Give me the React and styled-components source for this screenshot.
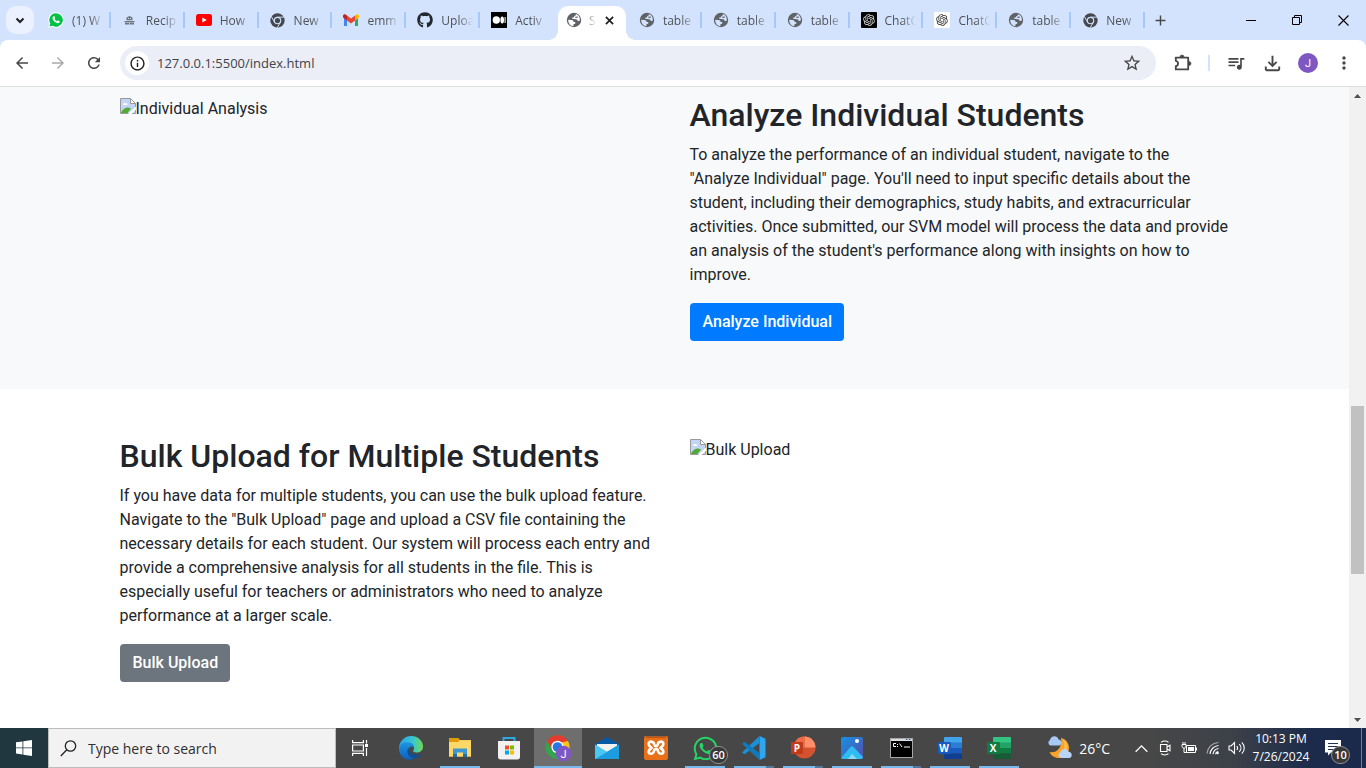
import React from "react";
import styled, { createGlobalStyle, css } from "styled-components";
import { FaGithub, FaWhatsapp } from "react-icons/fa";
import { RiOpenaiFill } from "react-icons/ri";
import {
  MdArrowBack,
  MdArrowForward,
  MdRefresh,
  MdInfoOutline,
  MdStarBorder,
  MdOutlineQueueMusic,
  MdOutlineFileDownload,
  MdMoreVert,
  MdAdd,
} from "react-icons/md";

const uiFont = `"Open Sans", "Noto Sans", sans-serif`;

const GlobalStyle = createGlobalStyle`
  *, *::before, *::after { box-sizing: border-box; }
  body { margin: 0; background: #fff; font-family: Roboto, sans-serif; }
  button { border: 0; margin: 0; padding: 0; background: none; font: inherit; color: inherit; }
  svg { display: block; flex: none; }
`;

const Screen = styled.div`
  display: flex;
  flex-direction: column;
  height: 100vh;
  overflow: hidden;
`;

/* ---------- Browser chrome ---------- */

const TabStrip = styled.header`
  display: flex;
  flex: none;
  height: 40px;
  padding-left: 6px;
  background: #d3e3fd;
  font-family: ${uiFont};
  font-size: 12px;
  color: #505256;
`;

const TabSearch = styled.button`
  display: grid;
  place-items: center;
  flex: none;
  width: 28px;
  height: 28px;
  margin: 6px 2px 0 0;
  border-radius: 10px;
  background: #ebf1fe;
  color: #1f1f1f;
`;

const Tabs = styled.div`
  display: grid;
  grid-auto-columns: minmax(0, 1fr);
  grid-auto-flow: column;
  flex: 0 1 1108px;
  min-width: 0;
`;

const Tab = styled.div`
  position: relative;
  display: flex;
  align-items: center;
  min-width: 0;
  padding: 0 6px 0 12px;
  gap: 8px;

  &::after {
    content: "";
    position: absolute;
    right: -1px;
    top: 12px;
    width: 2px;
    height: 16px;
    background: ${(p) => (p.$plain ? "transparent" : "#a8c7fa")};
  }
`;

const ActiveTab = styled.div`
  position: relative;
  display: flex;
  align-items: center;
  min-width: 0;
  height: 34px;
  margin: 6px 1px 0 5px;
  padding: 0 10px 6px 8px;
  gap: 7px;
  border-radius: 10px 10px 0 0;
  background: #fff;

  &::before,
  &::after {
    content: "";
    position: absolute;
    bottom: 0;
    width: 10px;
    height: 10px;
  }
  &::before {
    left: -10px;
    background: radial-gradient(circle at 0 0, transparent 10px, #fff 10px);
  }
  &::after {
    right: -10px;
    background: radial-gradient(circle at 100% 0, transparent 10px, #fff 10px);
  }
`;

const TabTitle = styled.span`
  flex: 1;
  min-width: 0;
  overflow: hidden;
  white-space: nowrap;
  mask-image: linear-gradient(to right, #000 calc(100% - 14px), transparent 100%);
`;

const Favicon = styled.span`
  display: grid;
  place-items: center;
  flex: none;
  width: 16px;
  height: 16px;
  border-radius: ${(p) => (p.$bg ? "1px" : "0")};
  background: ${(p) => p.$bg || "transparent"};
  color: ${(p) => p.$color || "#5f6368"};
`;

const IconButton = styled.button`
  display: grid;
  place-items: center;
  flex: none;
  width: ${(p) => p.$w || 36}px;
  height: ${(p) => p.$h || 34}px;
  color: ${(p) => p.$color || "#474747"};
`;

const WindowControls = styled.div`
  display: flex;
  margin-left: auto;
`;

const ToolbarBack = styled.div`
  flex: none;
  background: #d3e3fd;
`;

const Toolbar = styled.div`
  display: flex;
  align-items: center;
  height: 47px;
  padding: 0 4px;
  border-bottom: 1px solid #dde2e1;
  border-radius: 8px 8px 0 0;
  background: #fff;
`;

const AddressBar = styled.div`
  display: flex;
  align-items: center;
  flex: 1;
  min-width: 0;
  height: 34px;
  margin: 0 9px 0 8px;
  padding: 0 6px 0 5px;
  border-radius: 17px;
  background: #ebeef7;
`;

const SiteInfo = styled.button`
  display: grid;
  place-items: center;
  width: 24px;
  height: 24px;
  border-radius: 50%;
  background: #fff;
  color: #1f1f1f;
`;

const AddressInput = styled.input`
  flex: 1;
  min-width: 0;
  padding: 0 8px;
  border: 0;
  outline: 0;
  background: none;
  font-family: ${uiFont};
  font-size: 13px;
  color: #404348;
`;

const ToolbarDivider = styled.span`
  width: 2px;
  height: 16px;
  margin: 0 8px 0 7px;
  background: #d3e3fd;
`;

const Avatar = styled.span`
  display: grid;
  place-items: center;
  width: 20px;
  height: 20px;
  border-radius: 50%;
  background: #7e57c2;
  color: #fff;
  font-family: Roboto, sans-serif;
  font-size: 11px;
`;

/* ---------- Web page ---------- */

const Viewport = styled.div`
  display: flex;
  flex: 1;
  min-height: 0;
`;

const Page = styled.main`
  flex: 1;
  min-width: 0;
  overflow: hidden;
  color: #212529;
  font-size: 16px;
  line-height: 24px;
`;

const Section = styled.section`
  padding: ${(p) => (p.$first ? 9 : 48)}px 0 48px;
  background: ${(p) => (p.$first ? "#f8f9fa" : "#fff")};
`;

const Container = styled.div`
  display: grid;
  grid-template-columns: 1fr 1fr;
  gap: 30px;
  max-width: 1140px;
  margin: 0 auto;
  padding: 0 15px;
`;

const Heading = styled.h2`
  margin: 0 0 8px;
  font-size: 32px;
  font-weight: 500;
  line-height: 39px;
`;

const Copy = styled.p`
  margin: 0 0 16px;
`;

const ActionLink = styled.a`
  display: inline-block;
  padding: 6px 11px 6px 12px;
  border: 1px solid transparent;
  border-radius: 4px;
  background: ${(p) => (p.$secondary ? "#6c757d" : "#007bff")};
  color: #fff;
  font-weight: 500;
  text-decoration: none;
  vertical-align: top;
`;

const MissingImage = styled.div`
  display: flex;
  align-items: flex-start;
  padding-top: 1px;

  svg {
    margin-top: 1px;
  }
`;

const Scrollbar = styled.div`
  display: flex;
  flex-direction: column;
  flex: none;
  width: 17px;
  background: #f1f1f1;
`;

const ScrollArrow = styled.button`
  display: grid;
  place-items: center;
  height: 17px;
  color: #505050;
`;

const ScrollTrack = styled.div`
  display: flex;
  flex-direction: column;
  flex: 1;
  padding: 0 2px;
`;

const ScrollSpace = styled.div`
  flex: ${(p) => p.$share} 0 0;
  background: ${(p) => (p.$thumb ? "#c1c1c1" : "transparent")};
`;

/* ---------- Taskbar ---------- */

const Taskbar = styled.footer`
  display: flex;
  flex: none;
  height: 40px;
  background: linear-gradient(to right, #474747 84%, #3d4148 90%, #1c2b4b 96%, #1b2a4a);
  color: #fff;
  font-family: ${uiFont};
`;

const StartButton = styled.button`
  display: grid;
  place-items: center;
  flex: none;
  width: 48px;
  background: #203740;
`;

const SearchBox = styled.label`
  display: flex;
  align-items: center;
  flex: 0 1 288px;
  min-width: 120px;
  padding-left: 11px;
  gap: 11px;
  border: 1px solid #bdbdbd;
  background: #f2f2f2;
  color: #222;

  input {
    flex: 1;
    min-width: 0;
    padding: 0;
    border: 0;
    outline: 0;
    background: none;
    font: inherit;
    font-size: 14px;
  }
  input::placeholder {
    color: #2f2f2f;
    opacity: 1;
  }
`;

const Apps = styled.div`
  display: flex;
  gap: 1px;
  margin-left: 3px;
`;

const AppButton = styled.button`
  position: relative;
  display: grid;
  place-items: center;
  flex: none;
  width: 48px;
  background: ${(p) => (p.$active ? "#6e6e6e" : "transparent")};

  &::after {
    content: "";
    position: absolute;
    left: ${(p) => (p.$active ? 0 : 4)}px;
    right: ${(p) => (p.$active ? 0 : 4)}px;
    bottom: 0;
    height: 2px;
    ${(p) =>
      p.$open &&
      css`
        background: ${p.$stack
          ? "linear-gradient(to right, #76b9ed 32px, #54789a 32px)"
          : "#76b9ed"};
      `}
  }
`;

const Badge = styled.span`
  position: absolute;
  right: ${(p) => p.$right}px;
  bottom: 4px;
  display: grid;
  place-items: center;
  min-width: 19px;
  height: 18px;
  padding: 0 2px;
  border: 1px solid #909090;
  border-radius: 9px;
  background: #383838;
  font-size: 11px;
  font-weight: 600;
  line-height: 14px;
`;

const Tray = styled.div`
  display: flex;
  align-items: center;
  margin-left: auto;
`;

const Weather = styled.button`
  display: flex;
  align-items: center;
  gap: 6px;
  height: 40px;
  margin-right: 19px;
  font-size: 14px;
`;

const Clock = styled.button`
  display: block;
  width: 64px;
  font-size: 12px;
  line-height: 18px;
  text-align: center;
`;

const ActionCenter = styled.button`
  position: relative;
  display: grid;
  place-items: center;
  width: 40px;
  height: 40px;
`;

const ShowDesktop = styled.button`
  width: 5px;
  height: 40px;
  margin-left: 8px;
  border-left: 1px solid #75808f;
`;

/* ---------- Drawings ---------- */

const Chevron = ({ up, size = 10, stroke = 2 }) => (
  <svg width={size} height={size} viewBox="0 0 10 10" fill="none" stroke="currentColor" strokeWidth={stroke}>
    <path d={up ? "M.5 7.500 5 3l4.500 4.500" : "M1.500 3.500 5 7l3.500-3.500"} />
  </svg>
);

const Globe = ({ light = "#d3e3fd" }) => (
  <svg width="16" height="16" viewBox="0 0 16 16">
    <circle cx="8" cy="8" r="7.200" fill="#5f6368" />
    <path
      d="M2.200 7.800 5.600 8.100c1.200 0 2 .8 2 1.900h1.600l.2 1.600-1.900.7-.2 2C4.300 14 2.100 11.300 2.200 7.800z"
      fill={light}
    />
    <path
      d="M9.800 2.100c.2 1.300-.2 1.900-1.400 2L7.800 5.400 6.200 5.600c-.2 1 .4 1.500 1.500 1.500l2.600.1c1 .2 1 1.600 2.100 1.700l1.300-.1c.6-2.900-.6-5.600-3.900-6.700z"
      fill={light}
    />
    <path d="M9.300 4.600h2.500v1.200H9.300z" fill="#5f6368" />
  </svg>
);

const Puzzle = () => (
  <svg width="18" height="18" viewBox="0 0 18 18">
    <path
      d="M1.800 3.600h12.400v11.800H1.800v-3.200c3-.6 3-4.800 0-5.400z"
      fill="none"
      stroke="currentColor"
      strokeWidth="1.800"
      strokeLinejoin="round"
    />
    <path d="M6 3a2 2 0 0 1 4 0zM15 7.500a2 2 0 0 1 0 4z" fill="currentColor" stroke="currentColor" strokeWidth=".6" />
  </svg>
);

const WhatsAppDisc = () => (
  <svg width="16" height="16" viewBox="0 0 16 16">
    <path d="M8 .3A7.700 7.700 0 0 0 1.300 11.800L.2 15.800l4.100-1.100A7.700 7.700 0 1 0 8 .3z" fill="#fff" />
    <path d="M8 1.300a6.700 6.700 0 0 0-5.700 10.200l-.8 3 3.100-.8A6.700 6.700 0 1 0 8 1.300z" fill="#00c143" />
    <path d="M5.500 4.300c.5-.4.900-.2 1.100.3l.5 1.200c.1.400-.6.900-.5 1.200.5 1 1.300 1.700 2.400 2.200.3.100.8-.8 1.200-.7l1.400.7c.4.200.2 1-.2 1.400-1.100 1.100-2.900.5-4.400-.6S4.300 7.300 4.500 6c.1-.8.500-1.400 1-1.700z" fill="#fff" />
  </svg>
);

const ChefHat = () => (
  <svg width="11" height="9" viewBox="0 0 11 9" fill="#6f7580">
    <path d="M2.500 1.500 5.500 0l3 1.500v2.800h-6z" />
    <path d="M.5 5h10v1.200H.5zM1 6.800h4.200v1.700H1zM5.800 6.800H10v1.700H5.800z" />
    <path d="M4 2h1v1H4zM6 2h1v1H6z" fill="#d3e3fd" />
  </svg>
);

const YouTube = () => (
  <svg width="16" height="12" viewBox="0 0 16 12">
    <rect width="16" height="12" rx="2.500" fill="#f00" />
    <path d="M6.300 3.400v5.200L10.800 6z" fill="#fff" />
  </svg>
);

const ChromeMono = () => (
  <svg width="15" height="15" viewBox="0 0 24 24">
    <circle cx="12" cy="12" r="11.500" fill="#44474d" />
    <circle cx="12" cy="12" r="6" fill="#d3e3fd" />
    <circle cx="12" cy="12" r="4.200" fill="#44474d" />
    <path d="M12 6.600h11M7.300 14.700 1.900 5.300M16.700 14.700 11.300 24" stroke="#d3e3fd" strokeWidth="1.500" />
  </svg>
);

const Gmail = () => (
  <svg width="16" height="12" viewBox="0 0 16 12">
    <path d="M1 1.500V12h3V6z" fill="#4285f4" />
    <path d="M15 1.500V12h-3V6z" fill="#34a853" />
    <path d="M12 1.500 13.500.4C14.400-.2 16 .3 16 2v1.500L12 6.500z" fill="#fbbc04" />
    <path d="M4 1.500 2.500.4C1.600-.2 0 .3 0 2v1.500L4 6.500z" fill="#c5221f" />
    <path d="M4 1.500 8 4.500l4-3v5l-4 3-4-3z" fill="#ea4335" />
  </svg>
);

const Medium = () => (
  <svg width="16" height="16" viewBox="0 0 16 16" fill="#fff">
    <rect width="16" height="16" fill="#000" />
    <circle cx="5.300" cy="8" r="3.700" />
    <ellipse cx="11.200" cy="8" rx="1.800" ry="3.500" />
    <path d="M13.600 5h1v6h-1z" />
  </svg>
);

const CloseGlyph = () => (
  <svg width="9" height="9" viewBox="0 0 10 10" stroke="#1f1f1f" strokeWidth="1.900">
    <path d="M1 1l8 8M9 1 1 9" />
  </svg>
);

const MinimizeGlyph = () => (
  <svg width="10" height="10" viewBox="0 0 10 10">
    <path d="M0 5h10v1H0z" fill="#000" />
  </svg>
);

const RestoreGlyph = () => (
  <svg width="10" height="10" viewBox="0 0 10 10" fill="none" stroke="#000">
    <path d="M.5 2.500h7v7h-7zM2.500 2.500v-2h7v7h-2" />
  </svg>
);

const WinClose = () => (
  <svg width="11" height="11" viewBox="0 0 11 11" stroke="#000" strokeWidth="1.100">
    <path d="M.5.5l10 10M10.500.5l-10 10" />
  </svg>
);

const BrokenImage = () => (
  <svg width="16" height="16" viewBox="0 0 16 16" aria-hidden="true">
    <path d="M.5.5h10l5 5v10H.5z" fill="#c3d5f7" stroke="#9a9a9a" />
    <path d="M10.500.5v5h5z" fill="#fff" stroke="#9a9a9a" />
    <path d="M3 6.500c0-1.400 1.500-2 2.300-1 1.400-.5 2.300.3 2.200 1.500H3z" fill="#fff" />
    <path d="M1 14.500C3.500 11 6 9 9 9.800l2 .7-3.500 4.500H1z" fill="#52aa35" />
    <path d="M8 16l8-7.500v3L11.500 16z" fill="#fff" />
  </svg>
);

const Triangle = ({ down }) => (
  <svg width="7" height="4" viewBox="0 0 7 4" fill="currentColor">
    <path d={down ? "M0 0h7L3.500 4z" : "M0 4h7L3.500 0z"} />
  </svg>
);

const WindowsLogo = () => (
  <svg width="16" height="16" viewBox="0 0 16 16" fill="#fff">
    <path d="M0 2.300 6.500 1.400v6.100H0zM7.300 1.300 16 0v7.500H7.300zM0 8.300h6.500v6.200L0 13.600zM7.300 8.300H16V16l-8.700-1.300z" />
  </svg>
);

const SearchGlyph = () => (
  <svg width="17" height="17" viewBox="0 0 17 17" fill="none" stroke="#222" strokeWidth="1.300">
    <circle cx="10.500" cy="6" r="5.200" />
    <path d="M6.800 9.700.8 16" />
  </svg>
);

const TaskView = () => (
  <svg width="17" height="16" viewBox="0 0 17 16" fill="none" stroke="#fff" strokeWidth="1.200">
    <path d="M.6 0v2.600h10.800V0M.6 16v-2.600h10.800V16M.6 5h10.800v6H.6zM14.500 0v3.500M14.500 8v8" />
    <path d="M13 4h3v3h-3z" fill="#fff" stroke="none" />
  </svg>
);

const Edge = () => (
  <svg width="24" height="24" viewBox="0 0 24 24">
    <defs>
      <linearGradient id="edgeTop" x1="0" x2="1">
        <stop offset="0" stopColor="#2b9fe5" />
        <stop offset=".55" stopColor="#36c5d9" />
        <stop offset="1" stopColor="#6edb4e" />
      </linearGradient>
      <linearGradient id="edgeLeft" x1="0" x2="0" y1="0" y2="1">
        <stop offset="0" stopColor="#1c96e0" />
        <stop offset="1" stopColor="#0f5fbd" />
      </linearGradient>
    </defs>
    <path d="M0 11C1 4.500 6 0 12 0c7 0 12 5 12 10.500 0 4-3 6-6.500 6-3 0-4-1.200-3-2.500 1.500-2 .5-6-4-6C6 8 2 9.500 0 13z" fill="url(#edgeTop)" />
    <path d="M0 12C1 8 5 6 9 6.200c4.500.2 6.500 3.300 6 6-.8-1.500-2.500-2.200-4-1.200-3 2-2.500 8 2.500 10.500 1 .5 2 .7 3 .6C8 26.500-.5 20.500 0 12z" fill="url(#edgeLeft)" />
    <path d="M9.500 12c-2.500 3-.8 8.500 4 10 3.500 1 7.500-1 9-4-3 1.500-7.500 1.300-10-.8-1.800-1.500-3-3.500-3-5.200z" fill="#124f92" />
  </svg>
);

const Explorer = () => (
  <svg width="22" height="20" viewBox="0 0 22 20">
    <path d="M0 0h9l2 2h11v16.500H0z" fill="#f9c63d" />
    <path d="M0 0h9l1.500 2L9 4H0z" fill="#e29a08" />
    <path d="M0 4h9l2-1.500h11v16H0z" fill="#ffd868" />
    <path d="M4 19v-8.500h14V19h-4v-4.500H8V19z" fill="#3c97d3" />
    <path d="M4 16h4v3H4zM14 16h4v3h-4z" fill="#1f6fad" />
  </svg>
);

const Store = () => (
  <svg width="24" height="24" viewBox="0 0 24 24">
    <path d="M6.500 6V2h11v4" fill="none" stroke="#2ea9df" strokeWidth="2" />
    <path d="M1 5h22v16c0 1.500-1 2.500-2.500 2.500h-17C2 23.500 1 22.500 1 21z" fill="#f1f1f1" />
    <path d="M8 9.500h4v4H8z" fill="#f25022" />
    <path d="M13 9.500h4v4h-4z" fill="#7fba00" />
    <path d="M8 14.500h4v4H8z" fill="#00a4ef" />
    <path d="M13 14.500h4v4h-4z" fill="#ffb900" />
  </svg>
);

const ChromeProfile = () => (
  <svg width="28" height="28" viewBox="0 0 28 28">
    <circle cx="13.500" cy="13" r="12" fill="#33a44c" />
    <path d="M3.100 7A12 12 0 0 1 23.900 7l-.3 2H13.500L8 15.500z" fill="#e33b2e" />
    <path d="M23.900 7a12 12 0 0 1-10.400 18l5.400-9-1.500-7.500z" fill="#fbc116" />
    <circle cx="13.500" cy="13" r="6.200" fill="#fff" />
    <circle cx="13.500" cy="13" r="4.800" fill="#2577e8" />
    <circle cx="19.500" cy="19.500" r="7.800" fill="#7e57c2" />
    <text x="19.500" y="23.500" textAnchor="middle" fill="#fff" fontFamily="Roboto, sans-serif" fontSize="11">J</text>
  </svg>
);

const Mail = () => (
  <svg width="24" height="22" viewBox="0 0 24 22">
    <path d="M0 7 12 0l12 7v3H0z" fill="#0758a5" />
    <path d="M2 7h20v6l-10 5L2 13z" fill="#f1f1f1" />
    <path d="M0 7.500 12 15l12-7.500V22H0z" fill="#31b4ec" />
    <path d="M0 22 24 7.500V22z" fill="#1c9de0" />
    <path d="M0 7.500 12 15 0 22z" fill="#4bc7f4" />
  </svg>
);

const Xampp = () => (
  <svg width="24" height="24" viewBox="0 0 24 24">
    <rect width="24" height="24" rx="2" fill="#e9701b" />
    <path d="M2 0h20v2H2z" fill="#b65a20" />
    <path
      d="M9 6.200c-3-1.400-5 .2-4.200 2.600.3 1 1.500 1.800 2.700 3-1.800 1.500-3.500 2.700-2.800 4.700.8 2 4 1.500 5-.5.600-1.500 0-3 2.300-3s1.700 1.500 2.300 3c1 2 4.200 2.500 5 .5.700-2-1-3.200-2.800-4.700 1.200-1.200 2.400-2 2.700-3C20 6.400 18 4.800 15 6.200c-1.800 1-.6 4-3 4s-1.200-3-3-4z"
      fill="none"
      stroke="#fff"
      strokeWidth="2.600"
    />
  </svg>
);

const VsCode = () => (
  <svg width="24" height="24" viewBox="0 0 24 24">
    <path d="M17.500 0 23.500 2.800v18.400L17.500 24z" fill="#2da5ef" />
    <path d="M17.500 0v7L2.500 18.300 0 16.500z" fill="#1b90d6" />
    <path d="M0 7.800 2.500 5.800 17.500 17v7z" fill="#1379b8" />
  </svg>
);

const PowerPoint = () => (
  <svg width="25" height="24" viewBox="0 0 25 24">
    <circle cx="13.500" cy="11.500" r="11" fill="#d35230" />
    <path d="M13.500.5v11h11a11 11 0 0 0-11-11z" fill="#ff8f6b" />
    <path d="M13.500.5v11h-11a11 11 0 0 1 11-11z" fill="#ed6c47" />
    <rect x="0" y="6" width="12" height="12" rx="1" fill="#c13b1b" />
    <text x="6" y="16" textAnchor="middle" fill="#fff" fontFamily="Open Sans, sans-serif" fontWeight="700" fontSize="10">P</text>
  </svg>
);

const Photos = () => (
  <svg width="22" height="22" viewBox="0 0 22 22">
    <defs>
      <linearGradient id="photoSky" x2="1" y2="1">
        <stop offset="0" stopColor="#1592e6" />
        <stop offset="1" stopColor="#584ba9" />
      </linearGradient>
      <clipPath id="photoFrame"><rect width="22" height="22" rx="2" /></clipPath>
    </defs>
    <g clipPath="url(#photoFrame)">
      <rect width="22" height="22" fill="url(#photoSky)" />
      <path d="M0 21 9.500 10q1.500-1.500 3 0L22 20v2H0z" fill="#2ebcf3" />
      <path d="M7 22 11 17l5 5z" fill="#88ddfb" />
    </g>
    <circle cx="16" cy="4" r="2" fill="#fff" />
  </svg>
);

const Console = () => (
  <svg width="23" height="20" viewBox="0 0 23 20">
    <rect x=".5" y=".5" width="22" height="19" fill="#000" stroke="#a6a6a6" />
    <path d="M1 1h21v2H1z" fill="#ddd" />
    <path d="M16 1h1.500v1H16zM19 1h1.500v1H19z" fill="#345ea0" />
    <path d="M6 5.500H3.500v3H6M7.500 6v1M7.500 8v1M9.500 5.500l2.500 3.500M14 9h6" fill="none" stroke="#fff" />
  </svg>
);

const OfficeSheet = ({ letter, colors }) => (
  <svg width="24" height="22" viewBox="0 0 24 22">
    <path d="M6 1q0-1 1-1h16q1 0 1 1v5H6z" fill={colors[0]} />
    <path d="M6 5.500h18V11H6z" fill={colors[1]} />
    <path d="M6 11h18v5.500H6z" fill={colors[2]} />
    <path d="M6 16.500h18V21q0 1-1 1H7q-1 0-1-1z" fill={colors[3]} />
    <rect x="0" y="5" width="13" height="12" rx="1" fill={colors[4]} />
    <text x="6" y="15" textAnchor="middle" fill="#fff" fontFamily="Open Sans, sans-serif" fontWeight="700" fontSize="10">
      {letter}
    </text>
  </svg>
);

const MoonCloud = () => (
  <svg width="26" height="24" viewBox="0 0 26 24">
    <path d="M14 2c5 1 8 5 8 10 0 6-4.500 10-10 10-4.500 0-8-2.500-9.500-6 6 1.500 13-3 11.500-14z" fill="#f8a32c" />
    <path d="M16 3.500c3 2 4.500 5 4 8.500-.5 4-3 7-7 8 5-5 5.500-10 3-16.500z" fill="#ffc14b" />
    <path d="M3.500 9.500A3 3 0 0 1 3 4C4-.8 10.500-.8 11.500 3.500c3.500 0 4 6 .5 6z" fill="#a9c9f5" />
    <path d="M14 22a3 3 0 0 1-.5-5.800C14.500 12 20.500 12 21.500 15.800c4 0 4.500 6.200.5 6.200z" fill="#b9d4f8" />
  </svg>
);

const MeetNow = () => (
  <svg width="12" height="16" viewBox="0 0 12 16" fill="none" stroke="#fff" strokeWidth="1.100">
    <path d="M1.500 4.500h6.500v7H1.500zM8 7l3-1.800v5.600L8 9M2 2.300c2-1.700 5.500-1.700 7.500 0M2 13.700c2 1.700 5.500 1.700 7.500 0" />
  </svg>
);

const Battery = () => (
  <svg width="16" height="12" viewBox="0 0 16 12" fill="none" stroke="#fff">
    <path d="M5.500 3.500h9v7h-9zM1 2.500h4v2.300L3 6.500 1 4.800zM2 0v2M4 0v2M3 6v4.500h2.500" />
    <path d="M7 5h6v4H7z" fill="#fff" stroke="none" />
    <path d="M15.500 5.500v3" />
  </svg>
);

const Wifi = () => (
  <svg width="14" height="14" viewBox="0 0 14 14" fill="none" stroke="#fff" strokeWidth="1.100">
    <path d="M1 12.500C1.500 6.500 6 2 12.500 1.500" stroke="#aaa" />
    <path d="M4 13c.4-4.500 3.800-8 8.500-8.500M7 13.200c.4-3 2.500-5.200 5.500-5.700" />
    <circle cx="11.500" cy="12" r="1.300" fill="#fff" stroke="none" />
    <path d="M9.700 13.300c0-1.500 1-2.500 2.500-2.800" />
  </svg>
);

const Volume = () => (
  <svg width="18" height="14" viewBox="0 0 18 14" fill="none" stroke="#fff" strokeWidth="1.100">
    <path d="M1 5h2l3.500-3.500v11L3 9H1zM8.800 5c1 1.200 1 2.800 0 4M11.300 3.200c2.200 2.200 2.200 5.400 0 7.600M13.800 1.300c3.300 3.300 3.300 8.100 0 11.400" />
  </svg>
);

const Message = () => (
  <svg width="16" height="16" viewBox="0 0 16 16">
    <path d="M0 0h16v12.500H6L3 15.500v-3H0z" fill="#fff" />
    <path d="M3 3.500h10M3 6.500h10M3 9.500h7" stroke="#27334e" strokeWidth="1.200" />
  </svg>
);

/* ---------- Data ---------- */

const globe = <Globe />;
const chrome = <ChromeMono />;

const leftTabs = [
  { title: "(1) W", icon: <WhatsAppDisc /> },
  { title: "Recip", icon: <ChefHat /> },
  { title: "How", icon: <YouTube /> },
  { title: "New", icon: chrome },
  { title: "emm", icon: <Gmail /> },
  { title: "Uploa", icon: <FaGithub size={16} />, color: "#24292f" },
  { title: "Activ", icon: <Medium />, plain: true },
];

const rightTabs = [
  { title: "table", icon: globe },
  { title: "table", icon: globe },
  { title: "table", icon: globe },
  { title: "ChatG", icon: <RiOpenaiFill size={14} />, bg: "#000", color: "#ddd" },
  { title: "ChatG", icon: <RiOpenaiFill size={14} />, bg: "#fff", color: "#333" },
  { title: "table", icon: globe },
  { title: "New", icon: chrome },
];

const apps = [
  { name: "Microsoft Edge", icon: <Edge /> },
  { name: "File Explorer", icon: <Explorer />, open: true },
  { name: "Microsoft Store", icon: <Store /> },
  { name: "Google Chrome", icon: <ChromeProfile />, open: true, active: true },
  { name: "Mail", icon: <Mail /> },
  { name: "XAMPP", icon: <Xampp /> },
  { name: "WhatsApp", icon: <FaWhatsapp size={27} color="#25d366" />, open: true, badge: "60" },
  { name: "Visual Studio Code", icon: <VsCode />, open: true, stack: true },
  { name: "PowerPoint", icon: <PowerPoint />, open: true, stack: true },
  { name: "Photos", icon: <Photos />, open: true },
  { name: "Command Prompt", icon: <Console />, open: true, stack: true },
  { name: "Word", icon: <OfficeSheet letter="W" colors={["#41a5ee", "#2b7cd3", "#185abd", "#103f91", "#185abd"]} />, open: true },
  { name: "Excel", icon: <OfficeSheet letter="X" colors={["#33c481", "#21a366", "#107c41", "#185c37", "#107c41"]} />, open: true },
];

const BrowserTab = ({ tab }) => (
  <Tab $plain={tab.plain}>
    <Favicon $bg={tab.bg} $color={tab.color}>{tab.icon}</Favicon>
    <TabTitle>{tab.title}</TabTitle>
  </Tab>
);

export default function App() {
  return (
    <Screen>
      <GlobalStyle />
      <TabStrip>
        <TabSearch aria-label="Search tabs"><Chevron /></TabSearch>
        <Tabs>
          {leftTabs.map((tab, i) => <BrowserTab key={i} tab={tab} />)}
          <ActiveTab>
            <Favicon><Globe light="#fff" /></Favicon>
            <TabTitle>S</TabTitle>
            <IconButton $w={12} $h={16} aria-label="Close tab"><CloseGlyph /></IconButton>
          </ActiveTab>
          {rightTabs.map((tab, i) => <BrowserTab key={i} tab={tab} />)}
        </Tabs>
        <IconButton $w={32} $h={40} aria-label="New tab"><MdAdd size={17} /></IconButton>
        <WindowControls>
          <IconButton $w={46} $h={40} aria-label="Minimize"><MinimizeGlyph /></IconButton>
          <IconButton $w={46} $h={40} aria-label="Restore"><RestoreGlyph /></IconButton>
          <IconButton $w={46} $h={40} aria-label="Close"><WinClose /></IconButton>
        </WindowControls>
      </TabStrip>
      <ToolbarBack>
        <Toolbar>
          <IconButton aria-label="Back"><MdArrowBack size={18} /></IconButton>
          <IconButton aria-label="Forward" $color="#ababab"><MdArrowForward size={18} /></IconButton>
          <IconButton aria-label="Reload"><MdRefresh size={18} /></IconButton>
          <AddressBar>
            <SiteInfo aria-label="Site information"><MdInfoOutline size={17} /></SiteInfo>
            <AddressInput aria-label="Address" defaultValue="127.0.0.1:5500/index.html" />
            <IconButton aria-label="Bookmark"><MdStarBorder size={20} /></IconButton>
          </AddressBar>
          <IconButton aria-label="Extensions"><Puzzle /></IconButton>
          <ToolbarDivider />
          <IconButton aria-label="Media"><MdOutlineQueueMusic size={20} /></IconButton>
          <IconButton aria-label="Downloads"><MdOutlineFileDownload size={23} /></IconButton>
          <IconButton aria-label="Profile"><Avatar>J</Avatar></IconButton>
          <IconButton aria-label="Menu"><MdMoreVert size={20} /></IconButton>
        </Toolbar>
      </ToolbarBack>

      <Viewport>
        <Page>
          <Section $first>
            <Container>
              <MissingImage><BrokenImage />Individual Analysis</MissingImage>
              <div>
                <Heading>Analyze Individual Students</Heading>
                <Copy>
                  To analyze the performance of an individual student, navigate to the "Analyze Individual" page.
                  You'll need to input specific details about the student, including their demographics, study
                  habits, and extracurricular activities. Once submitted, our SVM model will process the data and
                  provide an analysis of the student's performance along with insights on how to improve.
                </Copy>
                <ActionLink href="#individual">Analyze Individual</ActionLink>
              </div>
            </Container>
          </Section>
          <Section>
            <Container>
              <div>
                <Heading>Bulk Upload for Multiple Students</Heading>
                <Copy>
                  If you have data for multiple students, you can use the bulk upload feature. Navigate to the
                  "Bulk Upload" page and upload a CSV file containing the necessary details for each student. Our
                  system will process each entry and provide a comprehensive analysis for all students in the
                  file. This is especially useful for teachers or administrators who need to analyze performance
                  at a larger scale.
                </Copy>
                <ActionLink href="#bulk" $secondary>Bulk Upload</ActionLink>
              </div>
              <MissingImage><BrokenImage />Bulk Upload</MissingImage>
            </Container>
          </Section>
        </Page>
        <Scrollbar>
          <ScrollArrow aria-label="Scroll up"><Triangle /></ScrollArrow>
          <ScrollTrack>
            <ScrollSpace $share={302} />
            <ScrollSpace $share={168} $thumb />
            <ScrollSpace $share={137} />
          </ScrollTrack>
          <ScrollArrow aria-label="Scroll down"><Triangle down /></ScrollArrow>
        </Scrollbar>
      </Viewport>

      <Taskbar>
        <StartButton aria-label="Start"><WindowsLogo /></StartButton>
        <SearchBox>
          <SearchGlyph />
          <input aria-label="Search" placeholder="Type here to search" />
        </SearchBox>
        <AppButton aria-label="Task View"><TaskView /></AppButton>
        <Apps>
          {apps.map((app) => (
            <AppButton key={app.name} aria-label={app.name} $open={app.open} $active={app.active} $stack={app.stack}>
              {app.icon}
              {app.badge && <Badge $right={1}>{app.badge}</Badge>}
            </AppButton>
          ))}
        </Apps>
        <Tray>
          <Weather><MoonCloud />26°C</Weather>
          <IconButton $w={24} $color="#fff" aria-label="Show hidden icons"><Chevron up size={13} stroke={1} /></IconButton>
          <IconButton $w={24} aria-label="Meet Now"><MeetNow /></IconButton>
          <IconButton $w={24} aria-label="Battery"><Battery /></IconButton>
          <IconButton $w={24} aria-label="Network"><Wifi /></IconButton>
          <IconButton $w={24} aria-label="Volume"><Volume /></IconButton>
          <Clock>10:13 PM<br />7/26/2024</Clock>
          <ActionCenter aria-label="Notifications">
            <Message />
            <Badge $right={3}>10</Badge>
          </ActionCenter>
          <ShowDesktop aria-label="Show desktop" />
        </Tray>
      </Taskbar>
    </Screen>
  );
}
